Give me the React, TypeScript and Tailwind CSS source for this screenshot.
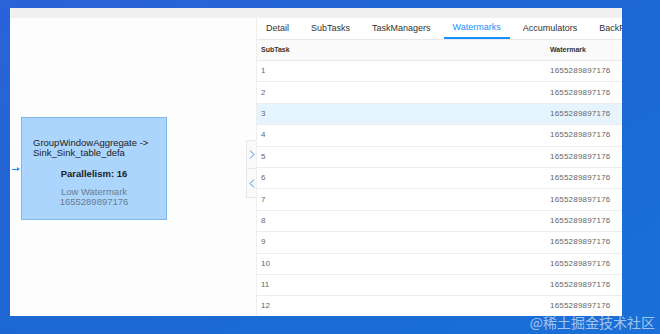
const tabs = ["Detail", "SubTasks", "TaskManagers", "Watermarks", "Accumulators", "BackPressure"];
const rows = Array.from({ length: 12 }, (_, i) => ({ id: i + 1, watermark: "1655289897176" }));

export default function App() {
  return (
    <div
      className="relative w-[660px] h-[334px] overflow-hidden bg-gradient-to-br from-[#2a62d9] via-[#1c68d2] to-[#1a70d8] pt-[8px] pl-[10px]"
      style={{ fontFamily: "'Liberation Sans', Arial, sans-serif" }}
    >
      <div className="flex flex-col w-[612px] h-[308px] bg-white">
        <div className="h-[10px] bg-[#f0f0f0]" />
        <div className="flex flex-1 min-h-0">
          {/* job graph canvas */}
          <div className="relative w-[246px] bg-[#fdfdfd]">
            <div className="absolute left-[2px] top-[149px] flex items-center">
              <div className="w-[5px] h-px bg-[#1890ff]" />
              <div className="w-0 h-0 border-y-[2px] border-y-transparent border-l-[3px] border-l-[#1890ff]" />
            </div>
            <div className="absolute left-[11px] top-[99px] w-[146px] h-[103px] bg-[#abd5fc] border border-[#7fb9ee] flex flex-col">
              <div className="mt-[20px] pl-[11px] text-[9.5px] leading-[10px] text-[#222]">
                <div>GroupWindowAggregate -&gt;</div>
                <div>Sink_Sink_table_defa</div>
              </div>
              <div className="mt-[9px] text-center text-[9.5px] font-bold text-[#222]">Parallelism: 16</div>
              <div className="mt-[6px] text-center text-[9.5px] leading-[10px] text-[#6a7c90]">
                <div>Low Watermark</div>
                <div>1655289897176</div>
              </div>
            </div>
            <div className="absolute left-[236px] top-[122px] w-[10px] flex flex-col">
              <div className="h-[29px] border border-r-0 border-[#e8e8e8] bg-[#fafafa] flex items-center justify-center">
                <svg width="6" height="9" viewBox="0 0 6 9" fill="none" stroke="#3b8fe0" strokeWidth="1">
                  <path d="M1 0.5 L5 4.5 L1 8.5" />
                </svg>
              </div>
              <div className="h-[29px] border border-r-0 border-t-0 border-[#e8e8e8] bg-[#fafafa] flex items-center justify-center">
                <svg width="6" height="9" viewBox="0 0 6 9" fill="none" stroke="#3b8fe0" strokeWidth="1">
                  <path d="M5 0.5 L1 4.5 L5 8.5" />
                </svg>
              </div>
            </div>
          </div>

          {/* detail drawer */}
          <div className="flex-1 min-w-0 flex flex-col border-l border-[#eeeeee] overflow-hidden">
            <div className="flex h-[22px] shrink-0 border-b border-[#e8e8e8] whitespace-nowrap">
              {tabs.map((t) => (
                <div
                  key={t}
                  className={
                    t === "Watermarks"
                      ? "px-[9px] mr-[4px] flex items-center text-[9px] text-[#1890ff] border-b-2 border-[#1890ff]"
                      : "px-[9px] mr-[4px] flex items-center text-[9px] text-[#333]"
                  }
                >
                  {t}
                </div>
              ))}
            </div>
            <div className="grid grid-cols-[293px_1fr] h-[21px] shrink-0 items-center border-b border-[#e8e8e8] bg-[#fafafa] text-[7px] font-bold text-[#333]">
              <div className="pl-[4px]">SubTask</div>
              <div>Watermark</div>
            </div>
            {rows.map((r) => (
              <div
                key={r.id}
                className={
                  r.id === 3
                    ? "grid grid-cols-[293px_1fr] h-[21.4px] shrink-0 items-center border-b border-[#ececec] bg-[#e6f4ff] text-[8px] text-[#666]"
                    : "grid grid-cols-[293px_1fr] h-[21.4px] shrink-0 items-center border-b border-[#ececec] text-[8px] text-[#666]"
                }
              >
                <div className="pl-[4px]">{r.id}</div>
                <div className="tracking-[0.2px]">{r.watermark}</div>
              </div>
            ))}
          </div>
        </div>
      </div>
      <div
        className="absolute right-[5px] bottom-[1px] text-[14px] text-white/60"
        style={{ fontFamily: "'Noto Sans CJK SC', sans-serif" }}
      >
        @稀土掘金技术社区
      </div>
    </div>
  );
}
